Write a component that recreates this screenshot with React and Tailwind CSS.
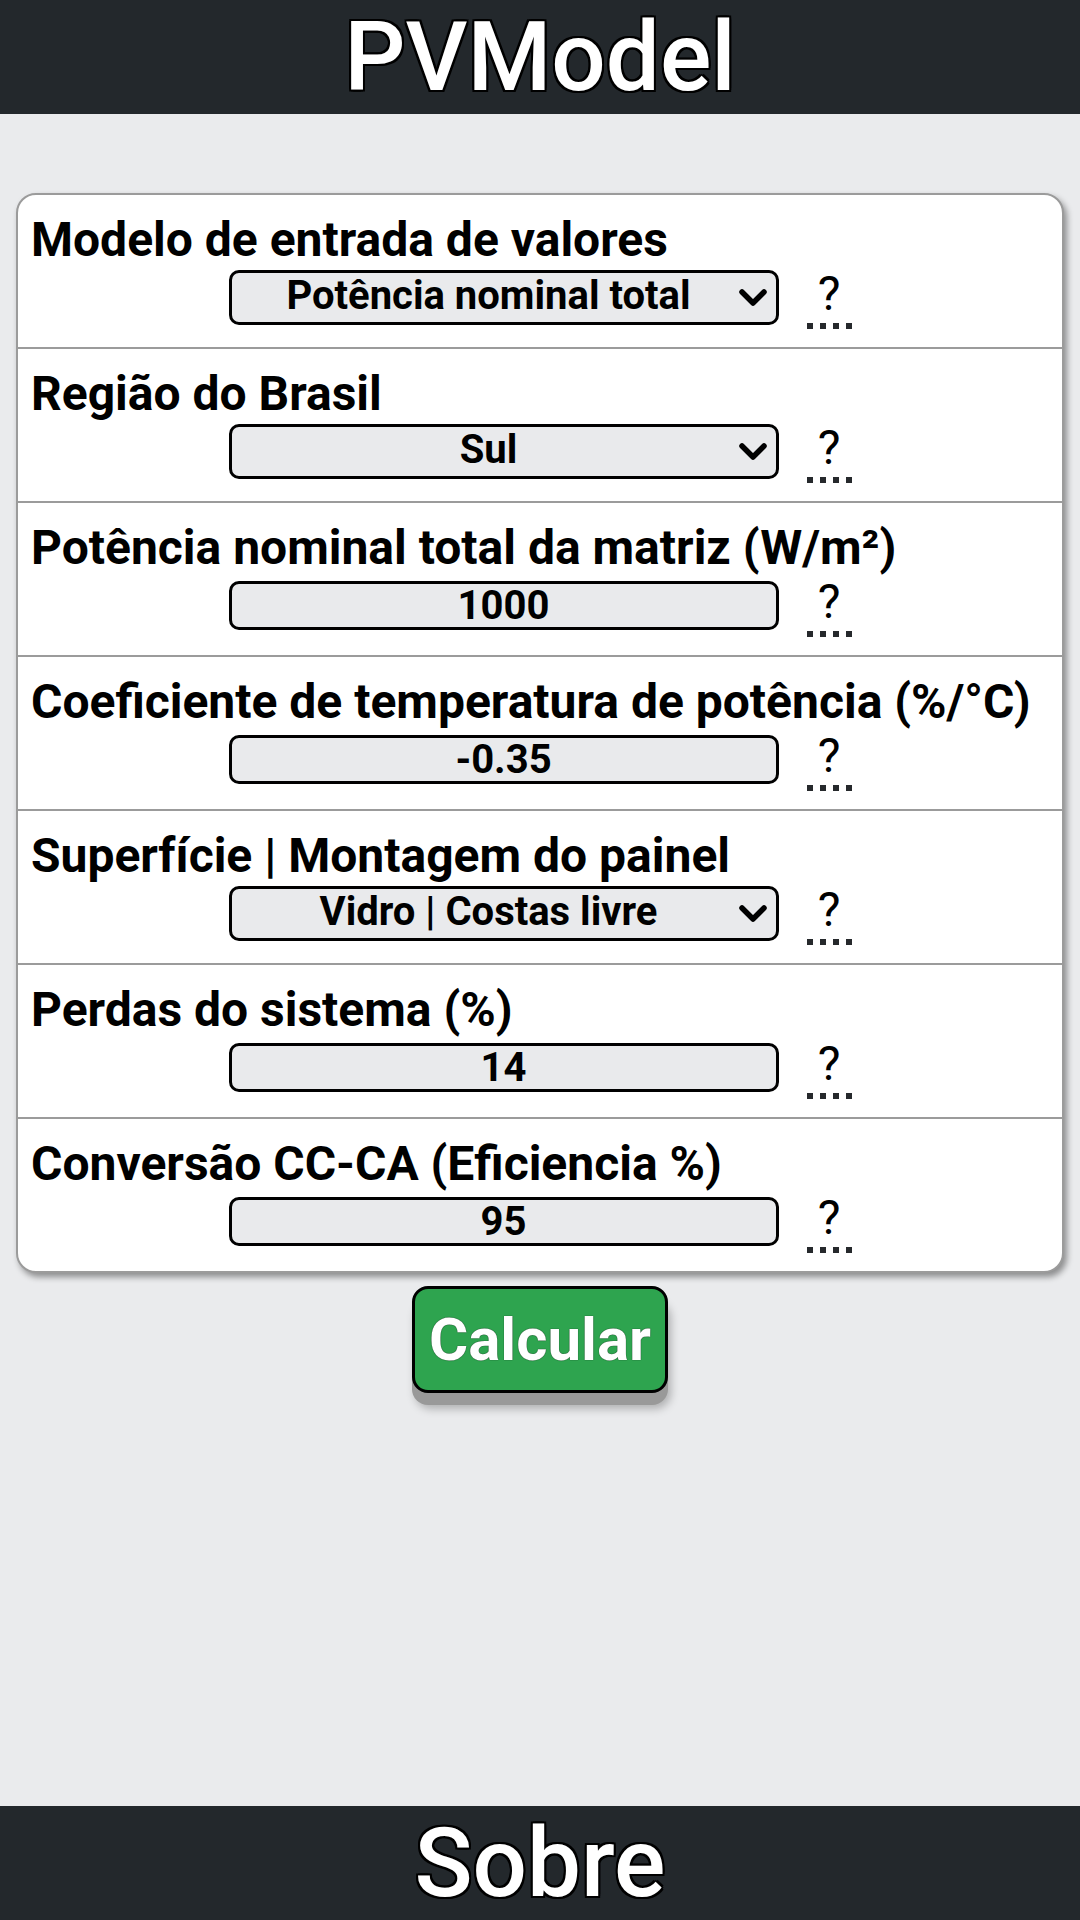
import { useState } from 'react';

// campos do formulário
const fields = [
  { label: 'Modelo de entrada de valores', type: 'select', value: 'Potência nominal total', options: ['Potência nominal total', 'Área e eficiência'] },
  { label: 'Região do Brasil', type: 'select', value: 'Sul', options: ['Norte', 'Nordeste', 'Centro-Oeste', 'Sudeste', 'Sul'] },
  { label: 'Potência nominal total da matriz (W/m²)', type: 'input', value: '1000' },
  { label: 'Coeficiente de temperatura de potência (%/°C)', type: 'input', value: '-0.35' },
  { label: 'Superfície | Montagem do painel', type: 'select', value: 'Vidro | Costas livre', options: ['Vidro | Costas livre', 'Vidro | Telhado', 'Polímero | Costas livre'] },
  { label: 'Perdas do sistema (%)', type: 'input', value: '14' },
  { label: 'Conversão CC-CA (Eficiencia %)', type: 'input', value: '95' },
];

const outline =
  '[text-shadow:-2px_-2px_0_#000,2px_-2px_0_#000,-2px_2px_0_#000,2px_2px_0_#000,0_2px_0_#000,0_-2px_0_#000,2px_0_0_#000,-2px_0_0_#000]';

function Help() {
  return (
    <div className="flex flex-col items-center w-[45px] shrink-0">
      <abbr title="Ajuda" className="no-underline text-[48px] leading-[48px] font-normal text-black cursor-help">
        ?
      </abbr>
      <span className="mt-[5px] block h-[6px] w-[45px] bg-[repeating-linear-gradient(90deg,#26292c_0_6px,transparent_6px_13px)]" />
    </div>
  );
}

function Field({ field, first }) {
  const [value, setValue] = useState(field.value);

  return (
    <div className={`px-[13px] pt-[21px] pb-[22px] ${first ? '' : 'border-t-2 border-[#9b9b9b]'}`}>
      <div className="text-[48px] leading-[48px] font-bold text-black whitespace-nowrap">{field.label}</div>
      <div className="mt-[6px] h-[55px] flex justify-center items-start gap-[28px]">
        {field.type === 'select' ? (
          <div className="relative w-[550px] h-[55px]">
            <select
              value={value}
              onChange={(e) => setValue(e.target.value)}
              className="appearance-none w-full h-full border-[3px] border-black rounded-[10px] bg-[#e9eaec] text-[40px] leading-[40px] font-bold text-black text-center [text-align-last:center] pl-[8px] pr-[38px] pt-0 pb-[3px] outline-none"
            >
              {field.options.map((o) => (
                <option key={o} value={o}>
                  {o}
                </option>
              ))}
            </select>
            <svg
              className="absolute right-[10px] top-1/2 -translate-y-1/2 w-[32px] h-[20px] pointer-events-none"
              viewBox="0 0 32 20"
              fill="none"
              stroke="black"
              strokeWidth="5.5"
              strokeLinecap="round"
              strokeLinejoin="round"
            >
              <path d="M5 4l11 11L27 4" />
            </svg>
          </div>
        ) : (
          <input
            type="text"
            value={value}
            onChange={(e) => setValue(e.target.value)}
            className="mt-[3px] w-[550px] h-[49px] border-[3px] border-black rounded-[10px] bg-[#e9eaec] text-[40px] leading-none font-bold text-black text-center outline-none"
          />
        )}
        <Help />
      </div>
    </div>
  );
}

export default function App() {
  return (
    <div className="min-h-[1920px] h-[1920px] flex flex-col bg-[#eaebed] font-['Roboto',_'Liberation_Sans',_sans-serif]">
      <header className="h-[114px] shrink-0 bg-[#23282c] flex items-center justify-center">
        <h1 className={`text-[96px] leading-[96px] font-medium text-white ${outline}`}>PVModel</h1>
      </header>

      <main className="flex-1 flex flex-col items-center pt-[79px] px-4">
        <div className="w-full bg-white border-2 border-[#9b9b9b] rounded-[20px] shadow-[3px_4px_6px_rgba(0,0,0,0.4)] overflow-hidden">
          {fields.map((f, i) => (
            <Field key={f.label} field={f} first={i === 0} />
          ))}
        </div>

        <button className="mt-[13px] w-[256px] h-[107px] rounded-[16px] border-[3px] border-black bg-[#2ea44f] text-white text-[60px] leading-none font-bold shadow-[0_12px_0_#999,3px_16px_8px_rgba(0,0,0,0.25)] [text-shadow:0_0_1px_#000]">
          Calcular
        </button>
      </main>

      <footer className="h-[114px] shrink-0 bg-[#23282c] flex items-center justify-center">
        <span className={`text-[96px] leading-[96px] font-medium text-white ${outline}`}>Sobre</span>
      </footer>
    </div>
  );
}
